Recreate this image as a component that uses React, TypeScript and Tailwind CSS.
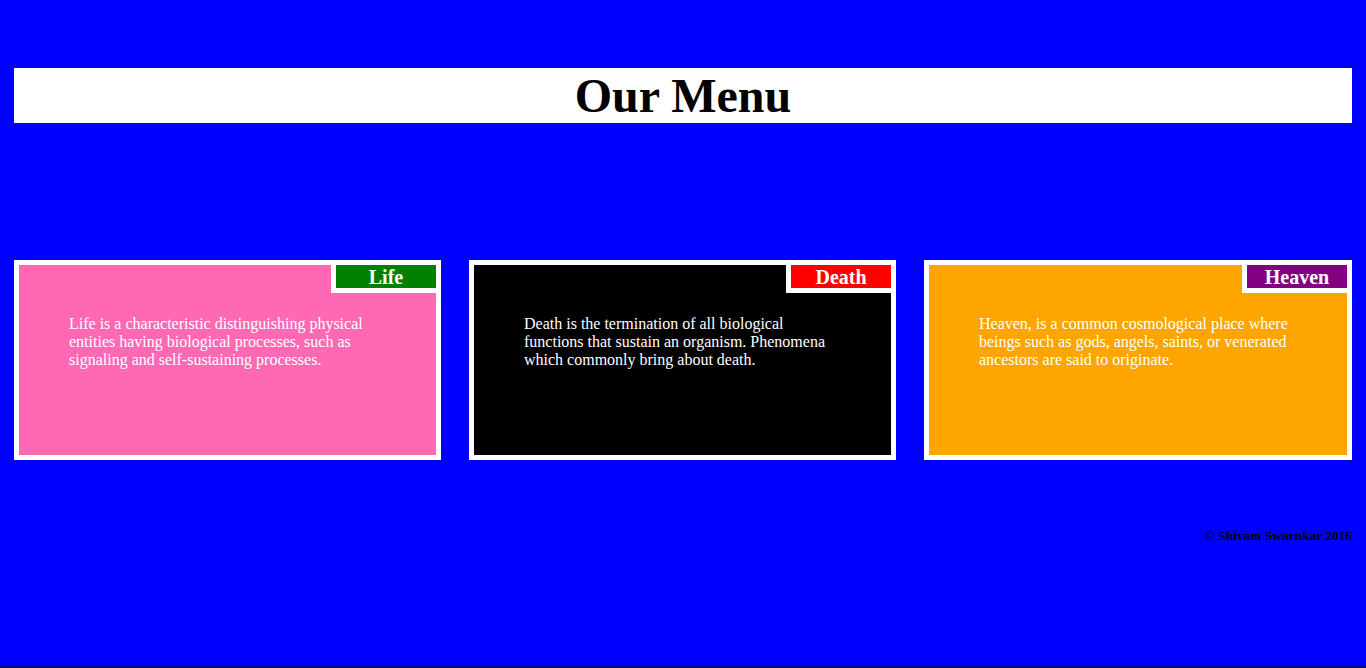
import React from "react";

type Item = { title: string; text: string; bg: string; tag: string };

const items: Item[] = [
  {
    title: "Life",
    text: "Life is a characteristic distinguishing physical entities having biological processes, such as signaling and self-sustaining processes.",
    bg: "bg-[#ff69b4]",
    tag: "bg-[#008000]",
  },
  {
    title: "Death",
    text: "Death is the termination of all biological functions that sustain an organism. Phenomena which commonly bring about death.",
    bg: "bg-black",
    tag: "bg-[#ff0000]",
  },
  {
    title: "Heaven",
    text: "Heaven, is a common cosmological place where beings such as gods, angels, saints, or venerated ancestors are said to originate.",
    bg: "bg-[#ffa500]",
    tag: "bg-[#800080]",
  },
];

function Card({ item }: { item: Item }) {
  return (
    <div className="border-[5px] border-white h-[200px]">
      <div className={`relative h-full ${item.bg}`}>
        <div
          className={`absolute top-0 right-0 w-[105px] h-[28px] pt-[1px] border-l-[5px] border-b-[5px] border-white ${item.tag} text-white text-[20px] leading-[22px] font-bold text-center`}
        >
          {item.title}
        </div>
        <p className="p-[50px] text-white text-[16px] leading-[18px]">{item.text}</p>
      </div>
    </div>
  );
}

export default function App() {
  return (
    <div
      className="min-h-screen bg-[#0000ff] flex flex-col"
      style={{ fontFamily: '"Liberation Serif", "Times New Roman", serif' }}
    >
      <div className="px-[14px] pt-[68px]">
        <h1 className="bg-white h-[55px] text-center text-[48px] leading-[55px] font-bold text-black">
          Our Menu
        </h1>

        <div className="grid grid-cols-[427px_1fr_428px] gap-[28px] mt-[137px]">
          {items.map((item) => (
            <Card key={item.title} item={item} />
          ))}
        </div>

        <div className="mt-[68px] text-right text-[13.4px] leading-[15px] font-bold text-black">
          © Shivam Swarnkar 2016
        </div>
      </div>

      <div className="mt-auto h-[2px] bg-[#0c0c80]" />
    </div>
  );
}
